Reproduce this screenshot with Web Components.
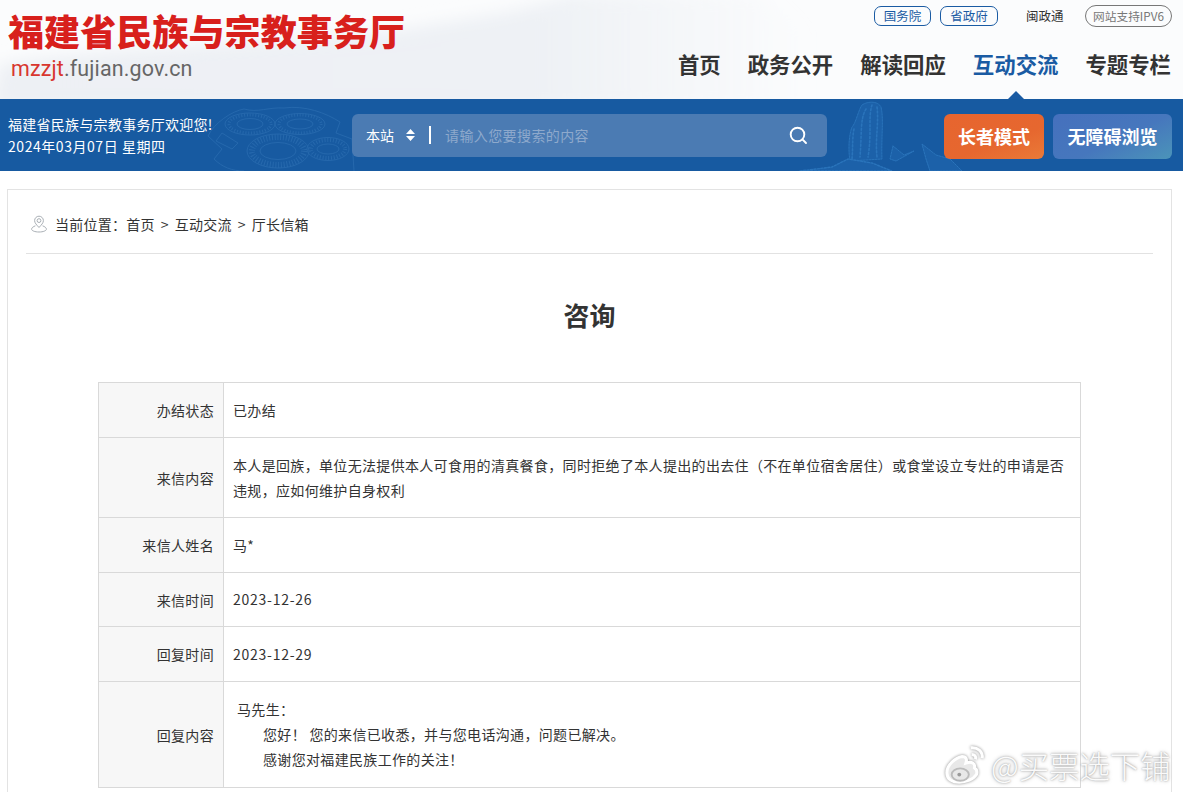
<!DOCTYPE html>
<html lang="zh-CN"><head><meta charset="utf-8"><title>咨询</title>
<style>
html,body{margin:0;height:792px;overflow:hidden;background:#fff}
body{font-family:"Noto Sans CJK SC","Liberation Sans",sans-serif;color:#333;position:relative}
</style></head><body>
<site-top></site-top>
<search-bar></search-bar>
<content-card>
  <bread-crumb></bread-crumb>
  <page-title>咨询</page-title>
  <info-table>
    <info-row label="办结状态" h="54">已办结</info-row>
    <info-row label="来信内容" h="79">本人是回族，单位无法提供本人可食用的清真餐食，同时拒绝了本人提出的出去住（不在单位宿舍居住）或食堂设立专灶的申请是否违规，应如何维护自身权利</info-row>
    <info-row label="来信人姓名" h="54">马*</info-row>
    <info-row label="来信时间" h="53"><span style="letter-spacing:.75px">2023-12-26</span></info-row>
    <info-row label="回复时间" h="54"><span style="letter-spacing:.75px">2023-12-29</span></info-row>
    <info-row label="回复内容" h="105" last reply>
      <div style="padding-left:4px">马先生：</div>
      <div style="padding-left:30px">您好！ 您的来信已收悉，并与您电话沟通，问题已解决。</div>
      <div style="padding-left:30px">感谢您对福建民族工作的关注！</div>
    </info-row>
  </info-table>
</content-card>
<weibo-mark></weibo-mark>
<script>
function def(name,html,init){customElements.define(name,class extends HTMLElement{
  constructor(){super();this.attachShadow({mode:'open'}).innerHTML=html;if(init)init.call(this)}
  connectedCallback(){if(this.ready)this.ready()}
})}
const CJK='"Noto Sans CJK SC","Liberation Sans",sans-serif';
def('site-top',`<style>
:host{display:flex;justify-content:space-between;height:99px;box-sizing:border-box;padding:0 12px 0 8px;position:relative;overflow:hidden;
background:#f8f9fb;font-family:${CJK}}
.bg{position:absolute;inset:0;width:100%;height:100%}
.brand,.right{position:relative}
.logo{font-weight:900;font-size:36px;line-height:40px;color:#d8201c;margin-top:10px;white-space:nowrap;letter-spacing:.1px}
.dom{font:21.45px/24px "Roboto","Liberation Sans",sans-serif;color:#666;margin:7px 0 0 3px;letter-spacing:.15px}
.dom b{font-weight:400;color:#d8362e}
.right{display:flex;flex-direction:column;align-items:flex-end}
.links{display:flex;align-items:center;font-size:12.5px;margin:5px -1px 0 0;height:21px}
.pill{box-sizing:border-box;height:20px;line-height:18px;border:1px solid #1a5ba3;border-radius:7px;color:#1a5ba3;text-align:center}
.a{width:57px;margin-right:9px}.b{width:58px;margin-right:28px}
.mzt{color:#333;margin-right:20px;width:39px;white-space:nowrap}
.ip{width:87px;height:22px;line-height:20px;border:1px solid #777;border-radius:11px;color:#777;font-size:11.7px;text-align:center;box-sizing:border-box;white-space:nowrap}
nav{display:flex;gap:27px;margin-top:22px;font-size:21.4px;font-weight:700;color:#333;line-height:32px;white-space:nowrap}
nav .on{color:#1a5ba3;position:relative}
nav .on::after{content:"";position:absolute;left:50%;margin-left:-8px;top:43px;border:8px solid transparent;border-top:0;border-bottom-color:#1a5ba3}
</style>
<svg class="bg" viewBox="0 0 1183 99" preserveAspectRatio="none">
<defs><linearGradient id="g" x1="0" y1="0" x2="1" y2="0"><stop offset="0" stop-color="#edf0f4"/><stop offset=".6" stop-color="#eef1f5"/><stop offset=".9" stop-color="#eef1f5" stop-opacity="0"/></linearGradient>
<filter id="b"><feGaussianBlur stdDeviation="8"/></filter></defs>
<rect width="1183" height="99" fill="#fbfcfd"/>
<path d="M0 64 C60 54 120 50 180 46 C260 40 340 36 410 28 C470 16 520 14 570 -6 L760 -6 C800 30 850 60 900 109 L-10 109Z" fill="url(#g)" filter="url(#b)"/>
</svg>
<div class="brand"><div class="logo">福建省民族与宗教事务厅</div><div class="dom"><b>mzzjt</b>.fujian.gov.cn</div></div>
<div class="right"><div class="links"><span class="pill a">国务院</span><span class="pill b">省政府</span><span class="mzt">闽政通</span><span class="ip">网站支持IPV6</span></div>
<nav><span>首页</span><span>政务公开</span><span>解读回应</span><span class="on">互动交流</span><span>专题专栏</span></nav></div>`);
def('search-bar',`<style>
:host{display:flex;align-items:center;height:72px;background:#175aa1;position:relative;overflow:hidden;font-family:${CJK};color:#fff;padding:0 11px 0 8px;box-sizing:border-box}
.deco{position:absolute;left:0;top:0;width:1183px;height:72px}
.hello{position:relative;width:344px;font-size:14px;line-height:22.5px;white-space:nowrap;letter-spacing:.27px}
.hello span{letter-spacing:.55px}
.box{position:relative;width:475px;height:43px;border-radius:6px;background:#4b7bb3;display:flex;align-items:center;padding-left:14px;box-sizing:border-box;font-size:14px}
.updown{margin:0 14px 0 12px;width:9px;height:12px}
.bar{width:2px;height:18px;background:#fff;margin-right:15px}
.ph{color:#8ea9cc;flex:1;letter-spacing:.4px;margin-left:-1px}
.mag{width:20px;height:20px;margin-right:19px}
.btn{position:relative;width:100px;height:45px;margin-top:2px;border-radius:6px;line-height:45px;text-align:center;font-weight:700;font-size:18px;white-space:nowrap;box-sizing:border-box}
.o{background:linear-gradient(160deg,#e7652f,#e6672f 60%,#ea7a38);margin-left:117px}
.bl{width:119px;margin-left:9px;background:linear-gradient(155deg,#4570bd,#4677bd 55%,#4b94b9)}
</style>
<svg class="deco" viewBox="0 0 1183 72" fill="none" stroke="#3a7cbd" stroke-width="1">
<g opacity=".42">
<path d="M208 37C214 24 232 12 244 10C258 14 268 8 284 9C305 6 326 14 340 23L336 34L352 40M208 37L222 50L214 60C222 68 232 72 244 72M352 40L354 72"/>
<path d="M222 34L238 44L232 50L216 42Z"/>
<g stroke-dasharray="1 1.8"><ellipse cx="250" cy="25" rx="21" ry="9" stroke-width="3"/><ellipse cx="300" cy="25" rx="21" ry="9" stroke-width="3"/><ellipse cx="278" cy="52" rx="26" ry="14" stroke-width="6"/><ellipse cx="328" cy="50" rx="17" ry="9" stroke-width="4"/></g>
<ellipse cx="250" cy="25" rx="25" ry="11"/><ellipse cx="250" cy="25" rx="13" ry="5.5"/>
<ellipse cx="300" cy="25" rx="25" ry="10.5"/><ellipse cx="300" cy="25" rx="13" ry="5"/>
<ellipse cx="278" cy="52" rx="31" ry="17"/><ellipse cx="278" cy="52" rx="18" ry="8.5"/>
<ellipse cx="328" cy="50" rx="21" ry="11.5"/><ellipse cx="328" cy="50" rx="11" ry="5"/>
</g>
<g stroke="#2a74bb" stroke-linecap="round" fill="#1c61a9">
<path stroke-width="1" stroke-dasharray="2 1" d="M862 6C868 2 878 2 881 8C884 20 881 40 882 60L850 62C848 50 849 36 852 28C856 24 858 12 862 6Z"/>
<path stroke-width="1.6" stroke-dasharray="2 2" fill="none" d="M866 10C860 20 862 32 860 58M872 6C868 18 872 34 868 58M877 8C879 24 875 40 877 58M854 30C852 40 853 50 852 60"/>
<path stroke-width="1" stroke-dasharray="2 1" d="M893 47L904 56L914 52L896 62L890 60Z"/>
<path stroke-width="1" stroke-dasharray="2 1" d="M922 45L936 56L950 60L962 72L930 72L926 60Z"/>
<path stroke-width="1.4" stroke-dasharray="2 1.5" d="M800 72L832 68L848 60L872 64L892 72Z"/>
</g>
</svg>
<div class="hello">福建省民族与宗教事务厅欢迎您!<br><span>2024年03月07日 星期四</span></div>
<div class="box"><span>本站</span>
<svg class="updown" viewBox="0 0 9 12"><path d="M4.5 0 9 5H0ZM0 7h9l-4.5 5Z" fill="#fff"/></svg><span class="bar"></span><span class="ph">请输入您要搜索的内容</span>
<svg class="mag" viewBox="0 0 20 20" fill="none" stroke="#fff" stroke-width="1.9"><circle cx="9.5" cy="9.5" r="6.8"/><path d="M14.4 14.4 18 18" stroke-linecap="round"/></svg></div>
<div class="btn o">长者模式</div><div class="btn bl">无障碍浏览</div>`);
def('content-card',`<style>
:host{display:block;box-sizing:border-box;margin:18px 11px 0 7px;height:700px;border:1px solid #e3e3e3;border-bottom:0;padding:0 18px;font-family:${CJK}}
</style><slot></slot>`);
def('bread-crumb',`<style>
:host{display:flex;align-items:center;box-sizing:content-box;border-bottom:1px solid #e2e2e2;font-size:14px;color:#333;padding:4px 0 0 4px;white-space:pre;height:59px}
svg{width:18px;height:18px;margin-right:7px}
.s{margin:0 6px}
span{letter-spacing:.25px}
</style><svg viewBox="0 0 18 18" fill="none" stroke="#a9afb5" stroke-width="1"><path d="M9 12.5C6.6 9.8 4.6 8 4.6 5.6a4.4 4.4 0 0 1 8.8 0C13.4 8 11.4 9.8 9 12.5Z"/><circle cx="9" cy="5.6" r="1.9"/><path d="M5.4 10.8C3.2 11.6 1.6 12.8 1.6 14.2c0 1.5 3.2 2.8 7.4 2.8s7.4-1.3 7.4-2.8c0-1.4-1.6-2.6-3.8-3.4"/></svg><span>当前位置：首页</span><span class="s">&gt;</span><span>互动交流</span><span class="s">&gt;</span><span>厅长信箱</span>`);
def('page-title',`<style>
:host{display:block;text-align:center;font-size:26px;font-weight:700;line-height:38px;color:#333;padding:42px 0 48px}
</style><slot></slot>`);
def('info-table',`<style>
:host{display:block;box-sizing:border-box;width:983px;margin-left:72px;border:1px solid #d9d9d9;border-bottom:0;font-size:14px;color:#333;letter-spacing:.33px}
</style><slot></slot>`);
def('info-row',`<style>
:host{display:grid;grid-template-columns:125px 1fr;border-bottom:1px solid #d9d9d9;box-sizing:content-box}
.k{background:#f7f7f7;border-right:1px solid #d9d9d9;display:flex;align-items:center;justify-content:flex-end;padding-right:9px}
.v{display:flex;flex-direction:column;justify-content:center;padding:0 9px 0 9px;line-height:25px}
</style><div class="k"></div><div class="v"><slot></slot></div>`,function(){
  this.ready=()=>{this.shadowRoot.querySelector('.k').textContent=this.getAttribute('label');this.style.height=this.getAttribute('h')+'px'}
});
def('weibo-mark',`<style>
:host{position:absolute;left:944px;top:742px;display:flex;align-items:center;color:rgba(255,255,255,.96);font:300 30.4px/46px ${CJK};text-shadow:0 0 2px #999,0 0 4px #bbb;white-space:nowrap}
svg{width:42px;height:42px;margin-right:5px;filter:drop-shadow(0 0 1.5px #888)}
span{display:block}
</style><svg viewBox="0 0 44 44" fill="none" stroke="#fff" stroke-width="3.2"><path d="M3 30c0-8 9-16 16-17 5 0 5 4 4 7 6-2 10 0 9 5 3 2 3 4 2 7-3 5-11 8-18 8S3 37 3 30Z" fill="#e8e8e8"/><ellipse cx="17" cy="32" rx="9" ry="6.5" stroke="#bbb" stroke-width="2"/><circle cx="16" cy="32" r="2" fill="#999" stroke="none"/><path d="M28 4c7-1 13 4 12 11M29 11c3 0 5 2 4 5"/></svg><span>@买票选下铺</span>`);
</script>
</body></html>
